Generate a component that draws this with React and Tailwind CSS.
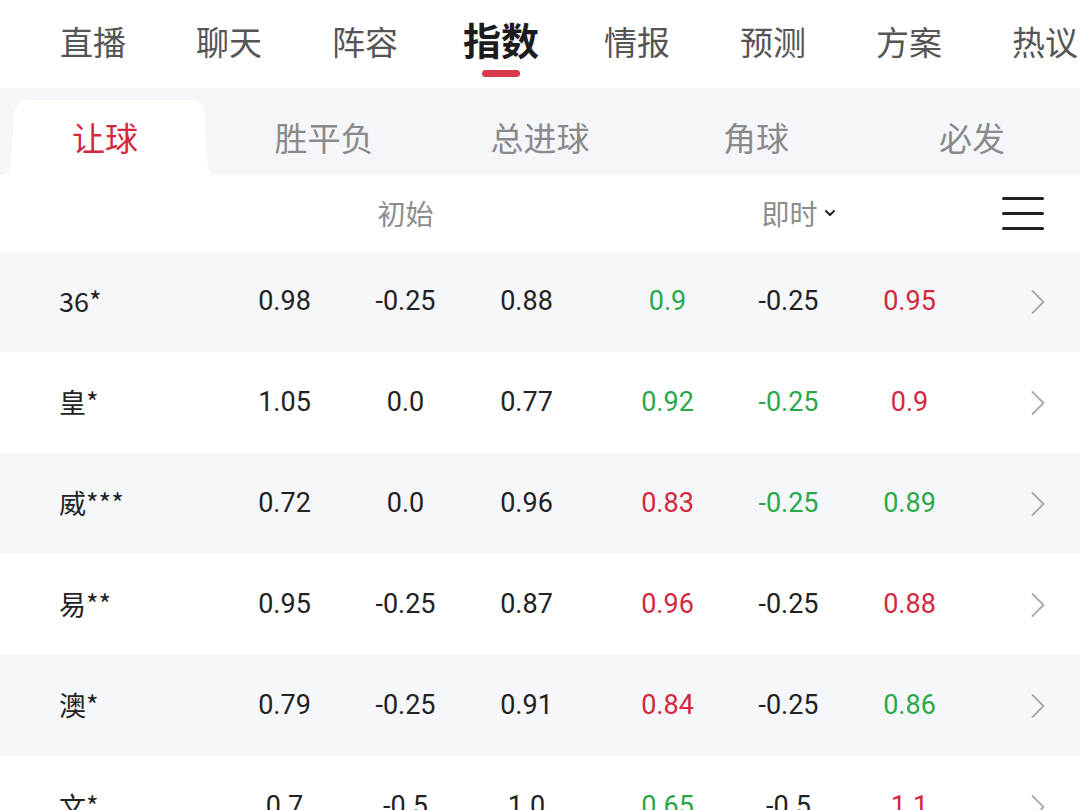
import { ChevronDown, ChevronRight } from 'lucide-react'

const navItems = ['直播', '聊天', '阵容', '指数', '情报', '预测', '方案', '热议']
const subTabs = ['让球', '胜平负', '总进球', '角球', '必发']

const G = 'text-[#2ba84a]'
const R = 'text-[#d3283e]'
const K = 'text-[#222222]'

const rows = [
  { name: '36*', init: ['0.98', '-0.25', '0.88'], now: [['0.9', G], ['-0.25', K], ['0.95', R]] },
  { name: '皇*', init: ['1.05', '0.0', '0.77'], now: [['0.92', G], ['-0.25', G], ['0.9', R]] },
  { name: '威***', init: ['0.72', '0.0', '0.96'], now: [['0.83', R], ['-0.25', G], ['0.89', G]] },
  { name: '易**', init: ['0.95', '-0.25', '0.87'], now: [['0.96', R], ['-0.25', K], ['0.88', R]] },
  { name: '澳*', init: ['0.79', '-0.25', '0.91'], now: [['0.84', R], ['-0.25', K], ['0.86', G]] },
  { name: '文*', init: ['0.7', '-0.5', '1.0'], now: [['0.65', G], ['-0.5', K], ['1.1', R]] },
]

const cjk = "font-['Noto_Sans_CJK_SC',sans-serif]"
const num = "font-['Roboto','Noto_Sans_CJK_SC',sans-serif]"

const marks = [
  { x: 10, y: 470 },
  { x: 460, y: 460 },
  { x: 980, y: 450 },
  { x: 250, y: 770 },
  { x: 820, y: 770 },
]

const App = () => {
  return (
    <div className={`relative w-[1080px] h-[810px] overflow-hidden bg-white ${cjk}`}>

      {/* Top nav */}
      <div className="h-[88px] bg-white flex items-start pl-[25px]">
        {navItems.map((item, i) => (
          <div key={item} className="w-[136px] shrink-0 flex flex-col items-center">
            {i === 3 ? (
              <>
                <span className="mt-[14px] text-[38px] leading-[50px] font-bold text-[#1c1c1c]">{item}</span>
                <span className="mt-[6px] w-[38px] h-[7px] rounded-full bg-[#d83a4c]" />
              </>
            ) : (
              <span className="mt-[17px] text-[33px] leading-[48px] text-[#555555]">{item}</span>
            )}
          </div>
        ))}
      </div>

      {/* Sub tabs */}
      <div className="h-[87px] bg-[#f5f6fa] flex items-end">
        {subTabs.map((t, i) => (
          <div key={t} className="relative w-[216px] h-[75px] flex items-center justify-center">
            {i === 0 && (
              <svg className="absolute inset-0" width="216" height="75" viewBox="0 0 216 75">
                <path d="M0 75 C8 75 10 70 11 62 L14 16 C15 5 20 0 30 0 L190 0 C200 0 204 5 205 16 L207 62 C208 70 210 75 218 75 Z" fill="#ffffff" />
              </svg>
            )}
            <span className={`relative text-[33px] leading-none ${i === 0 ? 'text-[#d3283e] pr-[6px]' : 'text-[#8a8a8a]'}`}>{t}</span>
          </div>
        ))}
      </div>

      {/* Header */}
      <div className="h-[76px] bg-white grid grid-cols-[224px_121px_121px_121px_20px_121px_121px_121px_1fr] items-center">
        <div />
        <div />
        <div className="text-center text-[28px] text-[#8c8c8c]">初始</div>
        <div />
        <div />
        <div />
        <div className="flex items-center justify-center pl-[22px] text-[28px] text-[#8c8c8c]">
          即时
          <ChevronDown className="w-[16px] h-[16px] ml-[4px] text-[#222]" strokeWidth={3} />
        </div>
        <div />
        <div className="flex justify-end pr-[36px]">
          <div className="flex flex-col gap-[12px]">
            <span className="block w-[42px] h-[3px] rounded-full bg-[#222]" />
            <span className="block w-[42px] h-[3px] rounded-full bg-[#222]" />
            <span className="block w-[42px] h-[3px] rounded-full bg-[#222]" />
          </div>
        </div>
      </div>

      {/* Rows */}
      {rows.map((r, i) => (
        <div
          key={r.name}
          className={`h-[101px] grid grid-cols-[224px_121px_121px_121px_20px_121px_121px_121px_1fr] items-center text-[27px] ${num} ${i % 2 === 0 ? 'bg-[#f6f7fa]' : 'bg-white'}`}
        >
          <div className={`pl-[59px] text-[#222] ${cjk}`}>{r.name}</div>
          {r.init.map((v, j) => (
            <div key={j} className="text-center text-[#222]">{v}</div>
          ))}
          <div />
          {r.now.map(([v, c], j) => (
            <div key={j} className={`text-center ${c}`}>{v}</div>
          ))}
          <div className="flex justify-end pr-[20px]">
            <ChevronRight className="w-[44px] h-[44px] text-[#aaaaaa]" strokeWidth={1} />
          </div>
        </div>
      ))}

      {/* watermark */}
      {marks.map((m, i) => (
        <div
          key={i}
          className="absolute pointer-events-none text-[48px] font-bold text-black/[0.025] -rotate-45 whitespace-nowrap"
          style={{ left: m.x, top: m.y }}
        >
          雷速体育
        </div>
      ))}
    </div>
  )
}

export default App
